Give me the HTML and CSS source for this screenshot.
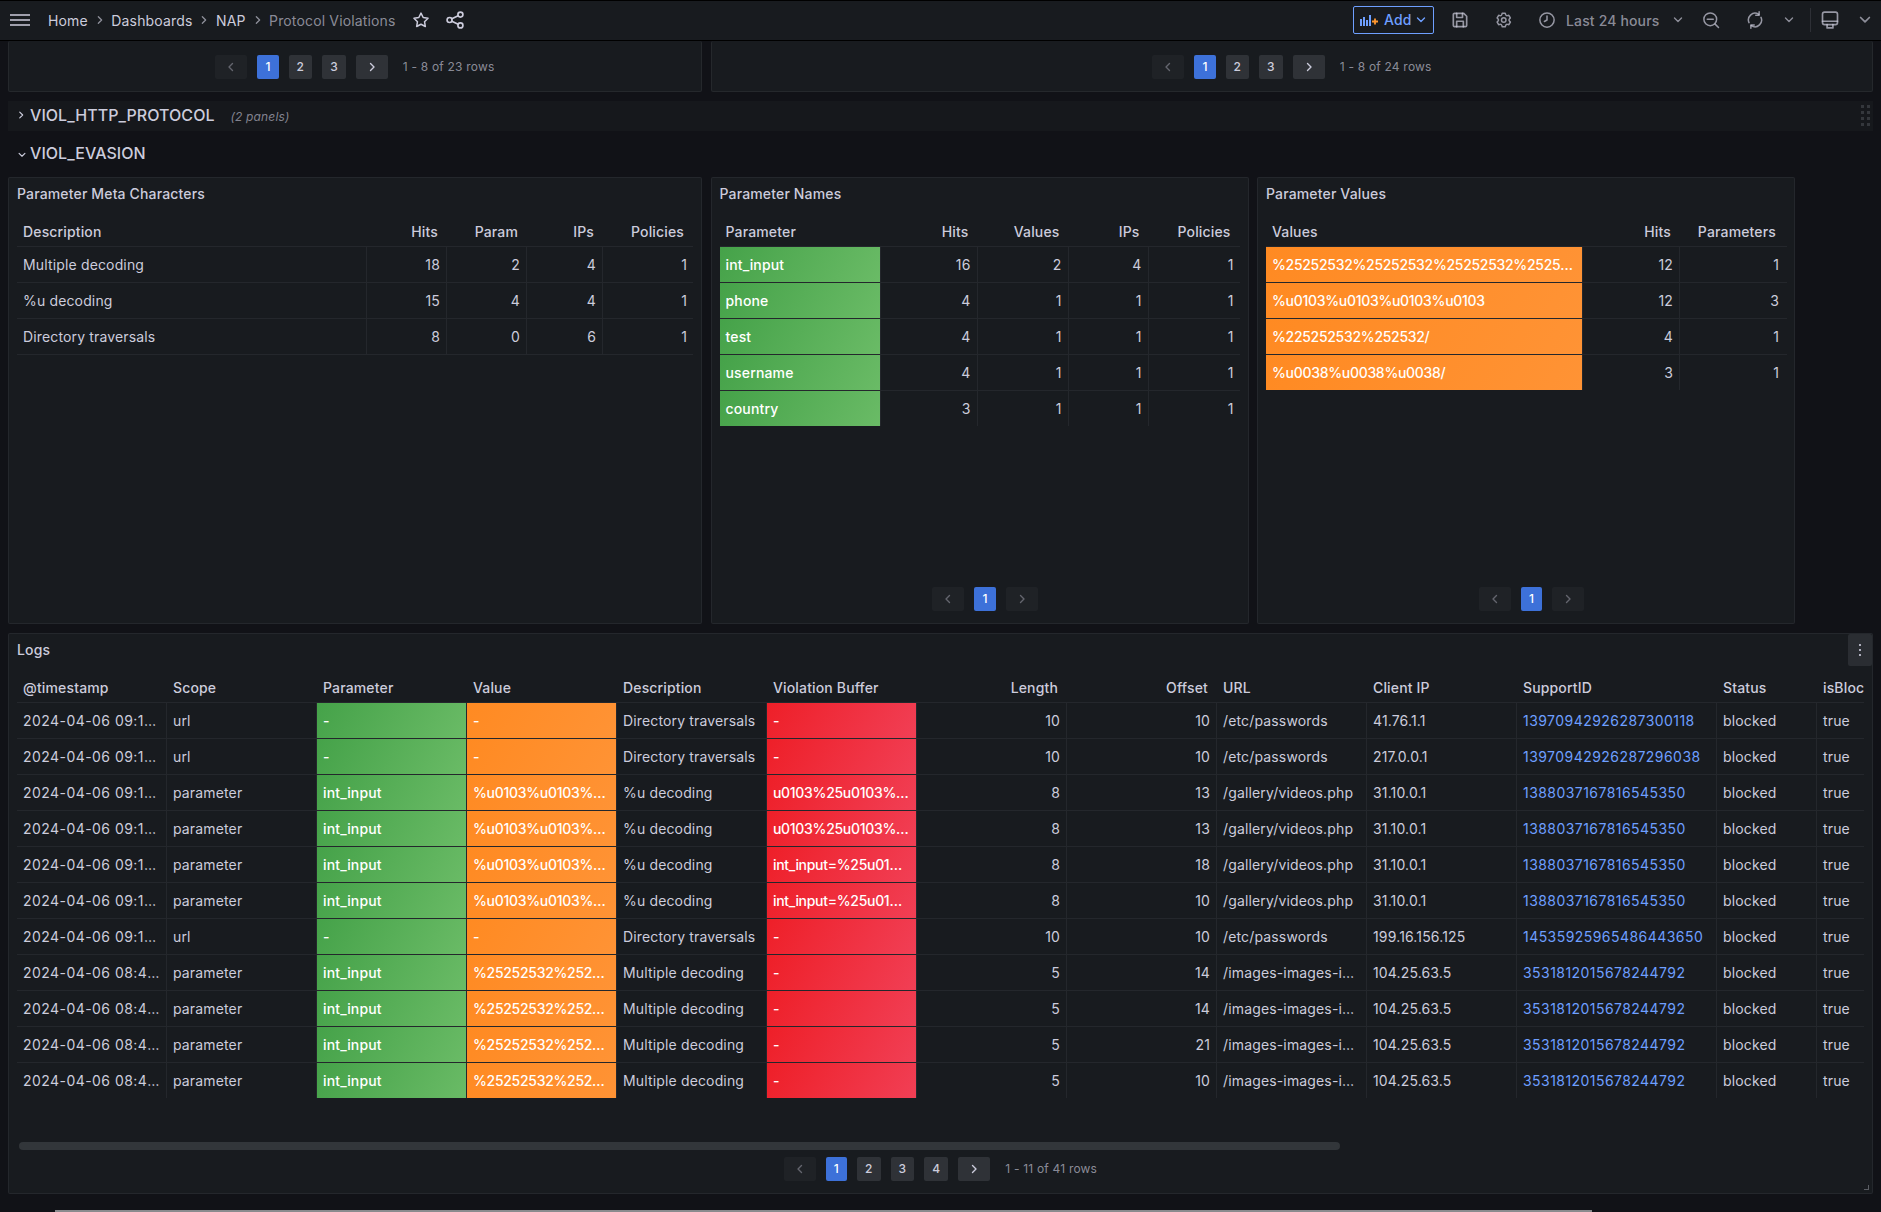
FILE: index.html
```html
<!DOCTYPE html>
<html lang="en">
<head>
<meta charset="utf-8">
<title>Protocol Violations</title>
<link rel="stylesheet" href="styles.css">
</head>
<body>
<svg class="sprite" aria-hidden="true">
  <symbol id="cr" viewBox="0 0 8 12"><path d="M2.500 2.500 6 6l-3.500 3.500"/></symbol>
  <symbol id="cl" viewBox="0 0 8 12"><path d="M5.500 2.500 2 6l3.500 3.500"/></symbol>
  <symbol id="cd" viewBox="0 0 12 8"><path d="M2.500 2 6 5.500 9.500 2"/></symbol>
</svg>
<header class="topbar">
  <svg class="burger" viewBox="0 0 20 12"><path d="M0 1h20M0 6h20M0 11h20"/></svg>
  <nav class="crumbs">
    <span>Home</span><svg class="sep"><use href="#cr"/></svg>
    <span>Dashboards</span><svg class="sep"><use href="#cr"/></svg>
    <span>NAP</span><svg class="sep"><use href="#cr"/></svg>
    <span class="current">Protocol Violations</span>
  </nav>
  <svg class="ico star" viewBox="0 0 24 24"><path d="m12 2.800 2.900 5.900 6.500.95-4.700 4.580 1.100 6.470L12 17.640l-5.800 3.060 1.100-6.470L2.600 9.650l6.500-.95z"/></svg>
  <svg class="ico share" viewBox="0 0 24 24"><circle cx="5.500" cy="12" r="3"/><circle cx="18.500" cy="5.500" r="3"/><circle cx="18.500" cy="18.500" r="3"/><path d="m8.200 10.600 7.600-3.700M8.200 13.400l7.600 3.700"/></svg>
  <div class="tools">
    <button class="add">
      <svg class="addico" viewBox="0 0 18 12"><path class="b" d="M0 5h2v7H0zM3 3h2v9H3zM6 6h2v6H6zM9 1h2v11H9z"/><path class="o" d="M12 7.500h6M15 4.500v6"/></svg>
      <span>Add</span>
      <svg class="cd"><use href="#cd"/></svg>
    </button>
    <span class="tool"><svg class="ico i20" viewBox="0 0 24 24"><path d="M4 5.500A1.500 1.500 0 0 1 5.500 4h11L20 7.500v11a1.500 1.500 0 0 1-1.500 1.500h-13A1.500 1.500 0 0 1 4 18.500z"/><path d="M8 4v5h7V4M8 20v-6.500h8V20"/></svg></span>
    <span class="tool"><svg class="ico fill" viewBox="0 0 24 24"><path d="M19.900 12.660a1 1 0 0 1 0-1.320l1.280-1.440a1 1 0 0 0 .12-1.170l-2-3.460a1 1 0 0 0-1.070-.48l-1.880.38a1 1 0 0 1-1.150-.66l-.61-1.830a1 1 0 0 0-.95-.68h-4a1 1 0 0 0-1 .68l-.56 1.830a1 1 0 0 1-1.150.66L5 4.790a1 1 0 0 0-1 .48L2 8.730a1 1 0 0 0 .1 1.170l1.270 1.440a1 1 0 0 1 0 1.320L2.100 14.100a1 1 0 0 0-.1 1.170l2 3.460a1 1 0 0 0 1.070.48l1.880-.38a1 1 0 0 1 1.150.66l.61 1.830a1 1 0 0 0 1 .68h4a1 1 0 0 0 .95-.68l.61-1.830a1 1 0 0 1 1.150-.66l1.880.38a1 1 0 0 0 1.070-.48l2-3.460a1 1 0 0 0-.12-1.170ZM18.410 14l.8.9-1.280 2.220-1.180-.24a3 3 0 0 0-3.450 2L12.920 20h-2.560L10 18.860a3 3 0 0 0-3.450-2l-1.180.24-1.300-2.210.8-.9a3 3 0 0 0 0-4l-.8-.9 1.280-2.200 1.180.24a3 3 0 0 0 3.450-2L10.360 4h2.560l.38 1.140a3 3 0 0 0 3.450 2l1.180-.24 1.280 2.220-.8.9a3 3 0 0 0 0 3.980Zm-6.770-6a4 4 0 1 0 4 4 4 4 0 0 0-4-4Zm0 6a2 2 0 1 1 2-2 2 2 0 0 1-2 2Z"/></svg></span>
    <span class="range">
      <svg class="ico i18" viewBox="0 0 24 24"><circle cx="12" cy="12" r="9.500"/><path d="M12 6.500V12l-3.500 2"/></svg>
      <span class="range-text">Last 24 hours</span>
      <svg class="cd"><use href="#cd"/></svg>
    </span>
    <span class="tool"><svg class="ico i18" viewBox="0 0 24 24"><circle cx="11" cy="11" r="8.500"/><path d="M7 11h8M17.500 17.500 22 22"/></svg></span>
    <span class="tool"><svg class="ico i18" viewBox="0 0 24 24"><path d="M4 15.500A8.800 8.800 0 0 1 6 5.500 8.800 8.800 0 0 1 17 4.500M20 8.500a8.800 8.800 0 0 1-2 10 8.800 8.800 0 0 1-11 1"/><path d="M17.500 1v4.500H13M6.500 23v-4.500H11"/></svg></span>
    <span class="tool narrow"><svg class="cd"><use href="#cd"/></svg></span>
    <span class="divider"></span>
    <span class="tool mon"><svg class="ico i20" viewBox="0 0 24 24"><rect x="3" y="2.500" width="18" height="15" rx="2.500"/><path d="M3 13.500h18M8.500 17.500v4h7v-4"/></svg></span>
    <span class="tool last"><svg class="cd big"><use href="#cd"/></svg></span>
  </div>
</header>

<main class="dash">
  <section class="stubs">
    <div class="panel stub">
      <div class="pager">
        <span class="pg off arrow"><svg class="chev"><use href="#cl"/></svg></span>
        <span class="pg on">1</span><span class="pg">2</span><span class="pg">3</span>
        <span class="pg arrow"><svg class="chev"><use href="#cr"/></svg></span>
        <span class="count">1 - 8 of 23 rows</span>
      </div>
    </div>
    <div class="panel stub">
      <div class="pager">
        <span class="pg off arrow"><svg class="chev"><use href="#cl"/></svg></span>
        <span class="pg on">1</span><span class="pg">2</span><span class="pg">3</span>
        <span class="pg arrow"><svg class="chev"><use href="#cr"/></svg></span>
        <span class="count">1 - 8 of 24 rows</span>
      </div>
    </div>
  </section>

  <div class="row-bar">
    <svg class="row-chev"><use href="#cr"/></svg>
    <span class="row-title">VIOL_HTTP_PROTOCOL</span>
    <span class="row-count">(2 panels)</span>
    <span class="drag"><i></i><i></i><i></i><i></i><i></i><i></i><i></i><i></i></span>
  </div>
  <div class="row-open">
    <svg class="row-chev down"><use href="#cd"/></svg>
    <span class="row-title">VIOL_EVASION</span>
  </div>

  <section class="trio">
    <div class="panel">
      <h2 class="ptitle">Parameter Meta Characters</h2>
      <table class="tbl">
        <colgroup><col class="w350"><col class="w80"><col class="w80"><col class="w76"><col class="w90"></colgroup>
        <thead><tr><th>Description</th><th class="r">Hits</th><th class="r">Param</th><th class="r">IPs</th><th class="r">Policies</th></tr></thead>
        <tbody>
          <tr><td>Multiple decoding</td><td class="r">18</td><td class="r">2</td><td class="r">4</td><td class="r">1</td></tr>
          <tr><td>%u decoding</td><td class="r">15</td><td class="r">4</td><td class="r">4</td><td class="r">1</td></tr>
          <tr><td>Directory traversals</td><td class="r">8</td><td class="r">0</td><td class="r">6</td><td class="r">1</td></tr>
        </tbody>
      </table>
    </div>
    <div class="panel">
      <h2 class="ptitle">Parameter Names</h2>
      <table class="tbl">
        <colgroup><col class="w161"><col class="w97"><col class="w91"><col class="w80"><col class="w91"></colgroup>
        <thead><tr><th>Parameter</th><th class="r">Hits</th><th class="r">Values</th><th class="r">IPs</th><th class="r">Policies</th></tr></thead>
        <tbody>
          <tr><td class="g">int_input</td><td class="r">16</td><td class="r">2</td><td class="r">4</td><td class="r">1</td></tr>
          <tr><td class="g">phone</td><td class="r">4</td><td class="r">1</td><td class="r">1</td><td class="r">1</td></tr>
          <tr><td class="g">test</td><td class="r">4</td><td class="r">1</td><td class="r">1</td><td class="r">1</td></tr>
          <tr><td class="g">username</td><td class="r">4</td><td class="r">1</td><td class="r">1</td><td class="r">1</td></tr>
          <tr class="end"><td class="g">country</td><td class="r">3</td><td class="r">1</td><td class="r">1</td><td class="r">1</td></tr>
        </tbody>
      </table>
      <div class="pager single">
        <span class="pg off arrow"><svg class="chev"><use href="#cl"/></svg></span>
        <span class="pg on">1</span>
        <span class="pg off arrow"><svg class="chev"><use href="#cr"/></svg></span>
      </div>
    </div>
    <div class="panel">
      <h2 class="ptitle">Parameter Values</h2>
      <table class="tbl inset">
        <colgroup><col class="w317"><col class="w97"><col class="w107"></colgroup>
        <thead><tr><th>Values</th><th class="r">Hits</th><th class="r">Parameters</th></tr></thead>
        <tbody>
          <tr><td class="o">%25252532%25252532%25252532%25252532%25252532%25252532</td><td class="r">12</td><td class="r">1</td></tr>
          <tr><td class="o">%u0103%u0103%u0103%u0103</td><td class="r">12</td><td class="r">3</td></tr>
          <tr><td class="o">%225252532%252532/</td><td class="r">4</td><td class="r">1</td></tr>
          <tr class="end"><td class="o">%u0038%u0038%u0038/</td><td class="r">3</td><td class="r">1</td></tr>
        </tbody>
      </table>
      <div class="pager single">
        <span class="pg off arrow"><svg class="chev"><use href="#cl"/></svg></span>
        <span class="pg on">1</span>
        <span class="pg off arrow"><svg class="chev"><use href="#cr"/></svg></span>
      </div>
    </div>
  </section>

  <section class="panel logs">
    <h2 class="ptitle">Logs</h2>
    <span class="menu"><svg viewBox="0 0 4 14"><path d="M2 2v.01M2 7v.01M2 12v.01"/></svg></span>
    <div class="clip">
      <table class="tbl wide">
        <colgroup><col class="w150"><col class="w150"><col class="w150"><col class="w150"><col class="w150"><col class="w150"><col class="w150"><col class="w150"><col class="w150"><col class="w150"><col class="w200"><col class="w100"><col class="w150"></colgroup>
        <thead><tr><th>@timestamp</th><th>Scope</th><th>Parameter</th><th>Value</th><th>Description</th><th>Violation Buffer</th><th class="r">Length</th><th class="r">Offset</th><th>URL</th><th>Client IP</th><th>SupportID</th><th>Status</th><th>isBlocked</th></tr></thead>
        <tbody>
          <tr><td>2024-04-06 09:12:41.512</td><td>url</td><td class="g">-</td><td class="o">-</td><td>Directory traversals</td><td class="d">-</td><td class="r">10</td><td class="r">10</td><td>/etc/passwords</td><td>41.76.1.1</td><td class="l">13970942926287300118</td><td>blocked</td><td>true</td></tr>
          <tr><td>2024-04-06 09:12:41.207</td><td>url</td><td class="g">-</td><td class="o">-</td><td>Directory traversals</td><td class="d">-</td><td class="r">10</td><td class="r">10</td><td>/etc/passwords</td><td>217.0.0.1</td><td class="l">13970942926287296038</td><td>blocked</td><td>true</td></tr>
          <tr><td>2024-04-06 09:12:18.340</td><td>parameter</td><td class="g">int_input</td><td class="o">%u0103%u0103%u0103%u0103</td><td>%u decoding</td><td class="d">u0103%25u0103%25u0103%25u0103</td><td class="r">8</td><td class="r">13</td><td>/gallery/videos.php</td><td>31.10.0.1</td><td class="l">1388037167816545350</td><td>blocked</td><td>true</td></tr>
          <tr><td>2024-04-06 09:12:18.340</td><td>parameter</td><td class="g">int_input</td><td class="o">%u0103%u0103%u0103%u0103</td><td>%u decoding</td><td class="d">u0103%25u0103%25u0103%25u0103</td><td class="r">8</td><td class="r">13</td><td>/gallery/videos.php</td><td>31.10.0.1</td><td class="l">1388037167816545350</td><td>blocked</td><td>true</td></tr>
          <tr><td>2024-04-06 09:12:18.340</td><td>parameter</td><td class="g">int_input</td><td class="o">%u0103%u0103%u0103%u0103</td><td>%u decoding</td><td class="d">int_input=%25u0103%25u0103</td><td class="r">8</td><td class="r">18</td><td>/gallery/videos.php</td><td>31.10.0.1</td><td class="l">1388037167816545350</td><td>blocked</td><td>true</td></tr>
          <tr><td>2024-04-06 09:12:18.340</td><td>parameter</td><td class="g">int_input</td><td class="o">%u0103%u0103%u0103%u0103</td><td>%u decoding</td><td class="d">int_input=%25u0103%25u0103</td><td class="r">8</td><td class="r">10</td><td>/gallery/videos.php</td><td>31.10.0.1</td><td class="l">1388037167816545350</td><td>blocked</td><td>true</td></tr>
          <tr><td>2024-04-06 09:12:03.118</td><td>url</td><td class="g">-</td><td class="o">-</td><td>Directory traversals</td><td class="d">-</td><td class="r">10</td><td class="r">10</td><td>/etc/passwords</td><td>199.16.156.125</td><td class="l">14535925965486443650</td><td>blocked</td><td>true</td></tr>
          <tr><td>2024-04-06 08:48:27.604</td><td>parameter</td><td class="g">int_input</td><td class="o">%25252532%25252532%25252532</td><td>Multiple decoding</td><td class="d">-</td><td class="r">5</td><td class="r">14</td><td>/images-images-images.php</td><td>104.25.63.5</td><td class="l">3531812015678244792</td><td>blocked</td><td>true</td></tr>
          <tr><td>2024-04-06 08:48:27.604</td><td>parameter</td><td class="g">int_input</td><td class="o">%25252532%25252532%25252532</td><td>Multiple decoding</td><td class="d">-</td><td class="r">5</td><td class="r">14</td><td>/images-images-images.php</td><td>104.25.63.5</td><td class="l">3531812015678244792</td><td>blocked</td><td>true</td></tr>
          <tr><td>2024-04-06 08:48:27.604</td><td>parameter</td><td class="g">int_input</td><td class="o">%25252532%25252532%25252532</td><td>Multiple decoding</td><td class="d">-</td><td class="r">5</td><td class="r">21</td><td>/images-images-images.php</td><td>104.25.63.5</td><td class="l">3531812015678244792</td><td>blocked</td><td>true</td></tr>
          <tr class="end"><td>2024-04-06 08:48:27.604</td><td>parameter</td><td class="g">int_input</td><td class="o">%25252532%25252532%25252532</td><td>Multiple decoding</td><td class="d">-</td><td class="r">5</td><td class="r">10</td><td>/images-images-images.php</td><td>104.25.63.5</td><td class="l">3531812015678244792</td><td>blocked</td><td>true</td></tr>
        </tbody>
      </table>
    </div>
    <div class="scroll-thumb"></div>
    <div class="pager">
      <span class="pg off arrow"><svg class="chev"><use href="#cl"/></svg></span>
      <span class="pg on">1</span><span class="pg">2</span><span class="pg">3</span><span class="pg">4</span>
      <span class="pg arrow"><svg class="chev"><use href="#cr"/></svg></span>
      <span class="count">1 - 11 of 41 rows</span>
    </div>
    <svg class="grip" viewBox="0 0 5 5"><path d="M0 5h5V0H4v4H0z"/></svg>
  </section>
</main>
<div class="page-line"></div>
</body>
</html>
```

FILE: styles.css
```css
* { box-sizing: border-box; }
html, body { margin: 0; height: 1212px; overflow: hidden; }
body {
  position: relative;
  background: #111217;
  color: #ccccdc;
  font: 400 14px/1.5 Inter, "Liberation Sans", sans-serif;
  letter-spacing: 0.01071em;
}
svg { display: block; flex: none; }
.sprite { width: 0; height: 0; position: absolute; }
symbol path { fill: none; stroke: currentColor; stroke-width: 1.4; stroke-linecap: round; stroke-linejoin: round; }

/* top bar */
.topbar {
  height: 41px;
  display: flex;
  align-items: center;
  padding: 0 0 1px 10px;
  background: #181b1f;
  border-top: 1px solid #000;
  border-bottom: 1px solid #000;
}
.burger { width: 20px; height: 12px; margin-right: 18px; fill: none; stroke: #ccccdc; stroke-width: 1.6; }
.crumbs { display: flex; align-items: center; gap: 8px; color: #ccccdc; }
.crumbs .current { color: rgba(204, 204, 220, 0.65); }
.sep { width: 7.500px; height: 12px; color: rgba(204, 204, 220, 0.65); }
.ico { width: 16px; height: 16px; fill: none; stroke: rgba(204, 204, 220, 0.7); stroke-width: 2; stroke-linecap: round; stroke-linejoin: round; }
.ico.fill { fill: rgba(204, 204, 220, 0.7); stroke: none; width: 18px; height: 18px; }
.ico.i18 { width: 18px; height: 18px; }
.ico.i20 { width: 20px; height: 20px; }
.star { margin-left: 16px; width: 18px; height: 18px; stroke: #ccccdc; }
.share { margin-left: 15px; width: 20px; height: 20px; stroke: #ccccdc; }
.tools { margin-left: auto; display: flex; align-items: center; height: 100%; color: rgba(204, 204, 220, 0.65); }
.cd { width: 12px; height: 8px; }
.add {
  display: flex;
  align-items: center;
  width: 81px;
  height: 28px;
  padding: 0 0 0 6px;
  margin-right: 4px;
  background: transparent;
  border: 1px solid #6e9fff;
  border-radius: 2px;
  color: #6e9fff;
  font: 500 14px/1 Inter, "Liberation Sans", sans-serif;
  letter-spacing: 0.01071em;
}
.addico { width: 18px; height: 12px; margin-right: 6px; }
.addico .b { fill: #6e9fff; }
.addico .o { fill: none; stroke: #ff9830; stroke-width: 1.8; }
.add .cd { margin-left: 3px; }
.tool { width: 44px; display: flex; justify-content: center; align-items: center; }
.tool.narrow { width: 24px; }
.tool.mon { width: 38px; }
.tool.last { width: 32px; }
.cd.big { width: 16px; height: 10px; }
.range { display: flex; align-items: center; margin-left: 12px; width: 151px; }
.range-text { margin-left: 10px; font-weight: 500; }
.range .cd { margin-left: 13px; }
.divider { width: 1px; height: 24px; margin-left: 9px; background: rgba(204, 204, 220, 0.12); }

/* dashboard */
.dash { padding: 0 8px; display: flex; flex-direction: column; }
.panel {
  position: relative;
  display: flex;
  flex-direction: column;
  background: #181b1f;
  border: 1px solid rgba(204, 204, 220, 0.07);
  border-radius: 2px;
  padding: 0 8px 12px;
}
.stubs { display: grid; grid-template-columns: 694px 1162px; gap: 9px; height: 51px; }
.stub { border-top: 0; padding-top: 14px; align-items: center; }
.row-bar {
  margin-top: 9px;
  height: 30px;
  display: flex;
  align-items: center;
  padding: 0 0 2px 9px;
  background: #16181c;
}
.row-open { height: 46px; display: flex; align-items: center; padding: 0 0 2px 9px; }
.row-chev { width: 8px; height: 10px; margin-right: 5px; }
.row-chev.down { width: 10px; height: 8px; margin: 3px 3px 0 0; }
.row-title { font-size: 16px; font-weight: 500; letter-spacing: 0.05px; line-height: 1; }
.row-count { margin: 3px 0 0 16px; font-size: 12px; font-style: italic; color: rgba(204, 204, 220, 0.6); }
.drag { margin-left: auto; margin-right: 3px; display: grid; grid-template-columns: 3px 3px; gap: 3px; }
.drag i { width: 3px; height: 3px; background: #34373c; }

.trio { display: grid; grid-template-columns: 694px 538px 538px; gap: 8.500px; height: 447px; }
.logs { margin-top: 9px; height: 561px; }
.ptitle { margin: 0; height: 36px; padding-top: 6px; font-size: 14px; font-weight: 500; line-height: 20px; color: #ccccdc; }

/* tables */
.tbl { table-layout: fixed; border-collapse: separate; border-spacing: 0; width: 100%; }
.tbl.wide { width: 1950px; }
.w76 { width: 76px; } .w80 { width: 80px; } .w90 { width: 90px; } .w91 { width: 91px; }
.w97 { width: 97px; } .w100 { width: 100px; } .w107 { width: 107px; } .w150 { width: 150px; }
.w161 { width: 161px; } .w200 { width: 200px; } .w317 { width: 317px; } .w350 { width: 350px; }
.tbl th {
  height: 33px;
  padding: 2px 9px 0 6px;
  font-weight: 500;
  text-align: left;
  white-space: nowrap;
  overflow: hidden;
  border-bottom: 1px solid rgba(204, 204, 220, 0.07);
}
.tbl td {
  height: 36px;
  padding: 0 6px;
  white-space: nowrap;
  overflow: hidden;
  text-overflow: ellipsis;
  background-clip: padding-box;
  border-right: 1px solid rgba(204, 204, 220, 0.07);
  border-bottom: 1px solid rgba(204, 204, 220, 0.07);
}
.tbl td:last-child { border-right: 0; }
.tbl.inset th:last-child { padding-right: 11px; }
.tbl.inset td:last-child { padding-right: 8px; }
.tbl tr.end td { height: 35px; border-bottom: 0; }
.tbl .r { text-align: right; }
.tbl td.g, .tbl td.o, .tbl td.d { color: #fff; font-weight: 500; }
.tbl td.o, .tbl td.d { letter-spacing: -0.3px; }
.tbl td.g { background-image: linear-gradient(120deg, #45a249, #6abb66); }
.tbl td.o { background-image: linear-gradient(120deg, #ff8a22, #ff9335); }
.tbl td.d { background-image: linear-gradient(120deg, #ee1f28, #f13f55); }
.tbl td.l { color: #6e9fff; letter-spacing: 0.45px; }
.wide td:first-child { letter-spacing: 0.45px; }
.clip { overflow: hidden; }

.menu {
  position: absolute;
  top: 0;
  right: 0;
  width: 24px;
  height: 32px;
  display: flex;
  align-items: center;
  justify-content: center;
  background: #2a2d32;
  border-radius: 2px;
}
.menu svg { width: 4px; height: 14px; fill: none; stroke: #ccccdc; stroke-width: 2.200; stroke-linecap: round; }
.scroll-thumb { width: 1321px; height: 8px; margin: 44px 0 0 2px; border-radius: 4px; background: #32363a; }
.grip { position: absolute; right: 3px; bottom: 3px; width: 5px; height: 5px; fill: #5a5d63; }

/* pagination */
.pager { margin-top: auto; display: flex; align-items: center; justify-content: center; gap: 10px; height: 24px; font-size: 12px; }
.pager.single { padding-left: 11px; }
.pg {
  height: 24px;
  padding: 0 8px;
  display: flex;
  align-items: center;
  justify-content: center;
  border-radius: 2px;
  background: #2f3237;
  color: #ccccdc;
  font-weight: 500;
}
.pg.arrow { width: 32px; padding: 0; }
.pg.off { background: #1f2226; color: rgba(204, 204, 220, 0.4); }
.pg.on { background: #3d71d9; color: #fff; }
.chev { width: 8px; height: 12px; }
.count { margin-left: 5px; color: rgba(204, 204, 220, 0.65); letter-spacing: 0.2px; }

.page-line { position: absolute; left: 55px; bottom: 0; width: 1537px; height: 2px; background: #8a8b8e; }
```
